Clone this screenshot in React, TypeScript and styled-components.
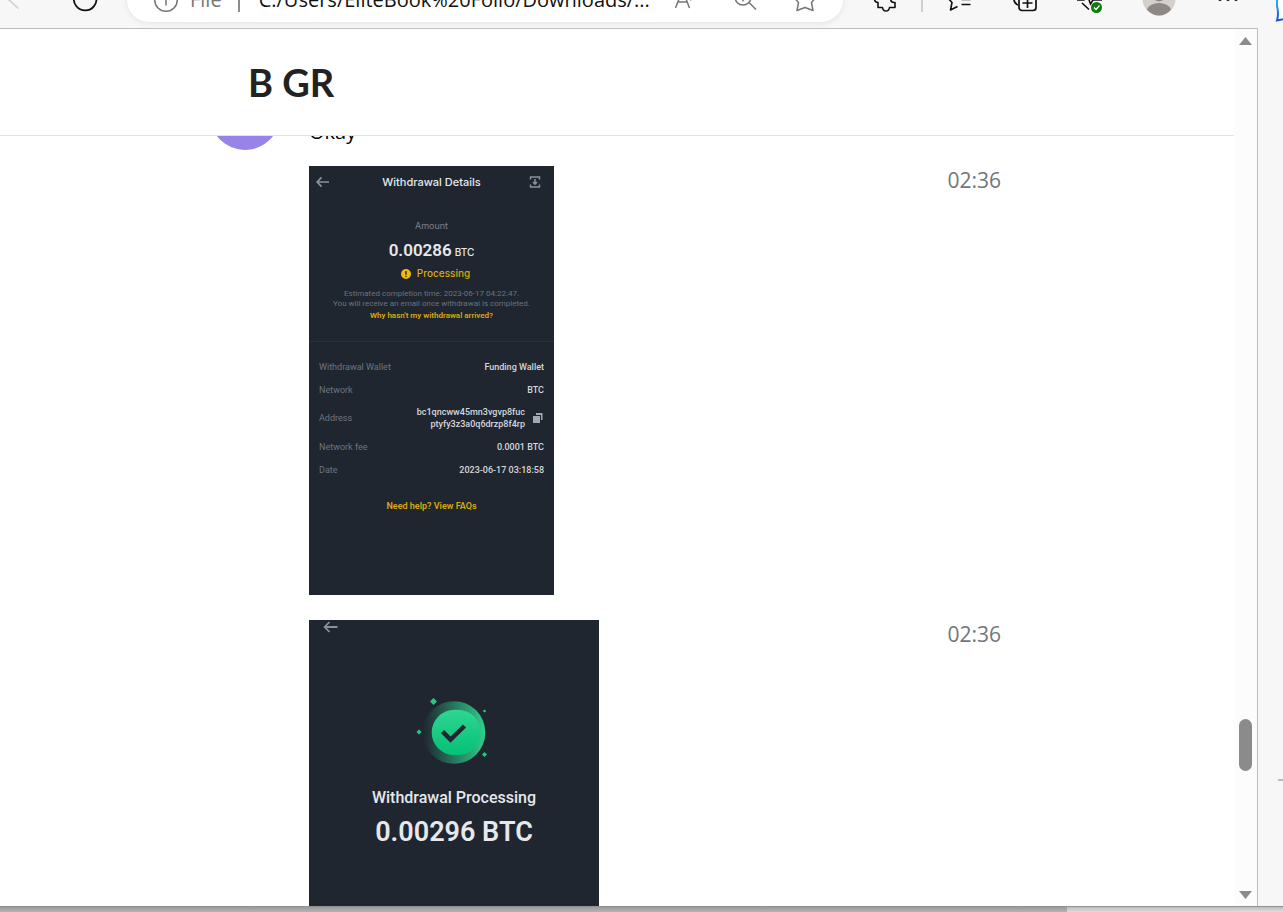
import React from "react";
import styled, { createGlobalStyle } from "styled-components";

const GlobalStyle = createGlobalStyle`
  * { box-sizing: border-box; }
  body { margin: 0; background: #f7f7f7; font-family: "Open Sans", "Noto Sans", sans-serif; color: #000; }
  button { border: 0; padding: 0; background: none; font: inherit; color: inherit; }
  svg { display: block; }
`;

const Window = styled.div`
  height: 100vh;
  display: flex;
  flex-direction: column;
  overflow: hidden;
`;

/* Browser toolbar: only its lower half is on screen */
const ToolbarClip = styled.header`
  height: 28px;
  flex: none;
  display: flex;
  align-items: flex-end;
  overflow: hidden;
`;

const Toolbar = styled.div`
  flex: 1;
  min-width: 0;
  height: 56px;
  display: flex;
  align-items: center;
`;

const IconButton = styled.button<{ $width: number }>`
  width: ${(p) => p.$width}px;
  height: 44px;
  flex: none;
  display: flex;
  align-items: center;
  justify-content: center;
`;

const AddressBar = styled.div`
  flex: 1;
  min-width: 0;
  height: 44px;
  margin: 0 18px 0 12px;
  padding: 0 24px;
  display: flex;
  align-items: center;
  background: #fff;
  border-radius: 22px;
  box-shadow: 0 1px 6px rgba(0, 0, 0, 0.09);
`;

const Scheme = styled.span`
  margin-left: 9px;
  font-size: 20px;
  line-height: 28px;
  color: #767676;
`;

const Divider = styled.span<{ $color: string; $gap: number }>`
  width: 2px;
  height: 24px;
  flex: none;
  margin-left: ${(p) => p.$gap}px;
  background: ${(p) => p.$color};
`;

const AddressInput = styled.input`
  flex: 1;
  min-width: 0;
  height: 28px;
  margin-left: 19px;
  padding: 0;
  border: 0;
  outline: 0;
  background: none;
  font: 20px/28px "Open Sans", "Noto Sans", sans-serif;
  color: #111;
`;

const Tools = styled.div`
  flex: none;
  display: flex;
  align-items: center;
`;

const Body = styled.div`
  flex: 1;
  min-height: 0;
  display: flex;
`;

const Page = styled.div`
  flex: 1;
  min-width: 0;
  display: flex;
  background: #fff;
  border-top: 1px solid #bcbcbc;
  border-right: 1px solid #bcbcbc;
`;

const Chat = styled.main`
  flex: 1;
  min-width: 0;
  display: flex;
  flex-direction: column;
`;

const ChatHeader = styled.div`
  flex: none;
  height: 107px;
  display: flex;
  align-items: center;
  border-bottom: 1px solid #e2e2e2;
`;

const Column = styled.div`
  width: 100%;
  max-width: 814px;
  margin: 0 auto;
`;

const ChatTitle = styled.h1`
  margin: 0;
  padding-left: 38px;
  font: 700 38px/52px Lato, "Open Sans", sans-serif;
  color: #222;
`;

const History = styled.div`
  flex: 1;
  min-height: 0;
  overflow: hidden;
`;

/* The history is scrolled, so the oldest message starts above the visible area */
const Messages = styled(Column)`
  margin-top: -56px;
  display: flex;
  flex-direction: column;
`;

const Message = styled.article`
  display: grid;
  grid-template-columns: 70px 1fr auto;
  column-gap: 29px;
  padding-right: 23px;
  margin-bottom: 25px;
  align-items: start;
`;

const TextMessage = styled(Message)`
  margin-bottom: 16px;
  align-items: end;
`;

const Avatar = styled.div`
  width: 70px;
  height: 70px;
  border-radius: 50%;
  background: #9884e8;
`;

const Text = styled.p`
  margin: 0;
  padding-bottom: 4px;
  font-size: 20px;
  line-height: 28px;
`;

const Time = styled.time`
  grid-column: 3;
  font-size: 21px;
  line-height: 28px;
  color: #70777b;
`;

const Photo = styled.section<{ $width: number; $height: number }>`
  grid-column: 2;
  width: ${(p) => p.$width}px;
  min-height: ${(p) => p.$height}px;
  display: flex;
  flex-direction: column;
  background: #1f2630;
  color: #e6e8ec;
  font-family: Roboto, Inter, sans-serif;
  text-align: center;
`;

const PhotoBar = styled.div`
  height: 32px;
  padding: 0 7px;
  display: grid;
  grid-template-columns: 18px 1fr 18px;
  align-items: center;
`;

const PhotoTitle = styled.h2`
  margin: 0;
  font: 500 11px/16px Inter, sans-serif;
`;

const Caption = styled.div`
  margin-top: 22px;
  font: 9px/12px Inter, sans-serif;
  color: #7b828d;
`;

const Amount = styled.div`
  margin-top: 6px;
  display: flex;
  align-items: baseline;
  justify-content: center;
  gap: 3px;
  font-size: 17px;
  font-weight: 600;
  line-height: 24px;
`;

const Unit = styled.span`
  font: 500 10px/12px Inter, sans-serif;
`;

const Status = styled.div`
  margin-top: 4px;
  padding-left: 8px;
  display: flex;
  align-items: center;
  justify-content: center;
  gap: 6px;
  font: 500 10px/15px Inter, sans-serif;
  color: #dba90e;
`;

const Note = styled.p`
  margin: 8px 0 0;
  font: 8px/10px Roboto, sans-serif;
  color: #6b727e;
`;

const GoldLink = styled.a<{ $size: number; $gap: number }>`
  align-self: center;
  margin-top: ${(p) => p.$gap}px;
  font-size: ${(p) => p.$size}px;
  font-weight: 600;
  line-height: 12px;
  color: #dba90e;
  text-decoration: none;
`;

const Details = styled.dl`
  margin: 19px 0 0;
  padding: 13px 10px 0;
  border-top: 1px solid #29303b;
  font: 9px/12px Roboto, sans-serif;
`;

const Detail = styled.div<{ $tall?: boolean }>`
  height: ${(p) => (p.$tall ? 34 : 23)}px;
  display: flex;
  align-items: center;
  justify-content: space-between;
`;

const Term = styled.dt`
  color: #6d7480;
`;

const Value = styled.dd`
  margin: 0;
  display: flex;
  align-items: center;
  gap: 7px;
  text-align: right;
  font-weight: 500;
  color: #d5d8dd;
`;

const BackBar = styled.div`
  height: 14px;
  padding-left: 14px;
  display: flex;
  align-items: center;
`;

const Art = styled.svg`
  margin: 58px auto 0;
`;

const ResultTitle = styled.h2`
  margin: 14px 0 0;
  font: 500 16px/24px Roboto, sans-serif;
`;

const ResultAmount = styled.div`
  margin-top: 4px;
  font-size: 27px;
  font-weight: 600;
  line-height: 36px;
`;

const Scrollbar = styled.div`
  width: 23px;
  flex: none;
  padding: 8px 5px 7px 0;
  display: flex;
  flex-direction: column;
  align-items: flex-end;
  background: #fcfcfc;
`;

const Spacer = styled.div<{ $grow: number }>`
  flex: ${(p) => p.$grow} 1 0;
`;

const Thumb = styled.div`
  width: 13px;
  height: 52px;
  border-radius: 7px;
  background: #8b8b8b;
`;

const Sidebar = styled.aside`
  width: 25px;
  flex: none;
  display: flex;
  flex-direction: column;
  align-items: flex-end;
`;

const SidebarMark = styled.div`
  width: 5px;
  height: 2px;
  background: #bcbcbc;
`;

const Taskbar = styled.div`
  height: 6px;
  flex: none;
  display: flex;
  border-top: 1px solid #929292;
  background: linear-gradient(#bdbdbd, #dedede);
`;

const TaskbarShade = styled.div`
  width: 83.2%;
  background: linear-gradient(#9b9b9b, #b3b3b3);
`;

const BackArrow = ({ size }: { size: number }) => (
  <svg width={size} height="12" viewBox="0 0 14 12" fill="none" stroke="#8b919c" strokeWidth="1.8">
    <path d="M14 6H1.5M6 1L1.2 6L6 11" />
  </svg>
);

const ScrollArrow = ({ down }: { down?: boolean }) => (
  <svg width="13" height="8" viewBox="0 0 13 8" fill="#8b8b8b">
    <path d={down ? "M0 0H13L6.5 8Z" : "M0 8H13L6.5 0Z"} />
  </svg>
);

const details: { label: string; value: React.ReactNode; tall?: boolean }[] = [
  { label: "Withdrawal Wallet", value: "Funding Wallet" },
  { label: "Network", value: "BTC" },
  {
    label: "Address",
    tall: true,
    value: (
      <>
        <span>
          bc1qncww45mn3vgvp8fuc
          <br />
          ptyfy3z3a0q6drzp8f4rp
        </span>
        <svg width="12" height="12" viewBox="0 0 12 12" fill="#a3a7ae">
          <path d="M1 4H8V11H1Z" />
          <path d="M4 1H10.5V8H9V3H4Z" />
        </svg>
      </>
    ),
  },
  { label: "Network fee", value: "0.0001 BTC" },
  { label: "Date", value: "2023-06-17 03:18:58" },
];

export default function App() {
  return (
    <Window>
      <GlobalStyle />
      <ToolbarClip>
        <Toolbar>
          <IconButton $width={55} aria-label="Back">
            <svg width="55" height="44" viewBox="0 0 55 44" fill="none" stroke="#cfcfcf" strokeWidth="1.6">
              <path d="M18.5 13.5L9 22L18.5 30.5" />
            </svg>
          </IconButton>
          <IconButton $width={60} aria-label="Refresh">
            <svg width="60" height="44" viewBox="0 0 60 44" fill="none" stroke="#111" strokeWidth="1.8">
              <path d="M36 11.5A11.3 11.3 0 1 0 41 18M36 6V12H30" />
            </svg>
          </IconButton>
          <AddressBar>
            <svg width="30" height="30" viewBox="0 0 30 30" fill="none" stroke="#767676" strokeWidth="1.5">
              <circle cx="15" cy="15" r="11.3" />
              <path d="M15 13.5V20.5M15 9V11" />
            </svg>
            <Scheme>File</Scheme>
            <Divider $color="#8c8c8c" $gap={16} />
            <AddressInput aria-label="Address" readOnly value="C:/Users/EliteBook%20Folio/Downloads/..." />
            <IconButton $width={32} aria-label="Read aloud">
              <svg width="32" height="32" viewBox="0 0 32 32" fill="none" stroke="#767676" strokeWidth="1.5">
                <path d="M8.5 24L15.5 6L22.5 24M11 18H20" />
                <path d="M22 8Q25 12 23.5 16.5" />
              </svg>
            </IconButton>
            <IconButton $width={92} aria-label="Zoom">
              <svg width="32" height="32" viewBox="0 0 32 32" fill="none" stroke="#767676" strokeWidth="1.5">
                <circle cx="14" cy="13" r="8" />
                <path d="M20 18.5L27 25.5M14 9V17.5M10 13H18" />
              </svg>
            </IconButton>
            <IconButton $width={28} aria-label="Add to favorites">
              <svg width="28" height="28" viewBox="0 0 28 28" fill="none" stroke="#767676" strokeWidth="1.5" strokeLinejoin="round">
                <path d="M14 3L17.5 10L25 11.2L20.5 16.5L22 24.5L14 21.5L6 24.5L7.5 16.5L3 11.2L10.5 10Z" />
              </svg>
            </IconButton>
          </AddressBar>
          <Tools>
            <IconButton $width={48} aria-label="Extensions">
              <svg width="28" height="28" viewBox="0 0 28 28" fill="none" stroke="#111" strokeWidth="1.6" strokeLinejoin="round">
                <path d="M8 4H11.5A3 3 0 0 1 17 4H23V10A3 3 0 0 0 23 16.5H24V21.5H18.5Q18 25 15 25T11.5 21.5H7V16.5Q3.5 16 3.5 13T7 10Z" />
              </svg>
            </IconButton>
            <Divider $color="#cfcfcf" $gap={12} />
            <IconButton $width={73} aria-label="Favorites">
              <svg width="28" height="28" viewBox="0 0 28 28" fill="none" stroke="#111" strokeWidth="1.6" strokeLinejoin="round">
                <path d="M13 6L10 3L7.5 10L1 11L6 16.5L4.5 24L11.5 20.5M15.500 13.5H24.5M15.5 18.5H24.5M16 8H24.5" />
              </svg>
            </IconButton>
            <IconButton $width={58} aria-label="Collections">
              <svg width="28" height="28" viewBox="0 0 28 28" fill="none" stroke="#111" strokeWidth="1.7">
                <rect x="8" y="7" width="17" height="17.5" rx="3" />
                <path d="M16.5 12V22M11.5 17H21.5M7 19Q3 17.5 3 13V7Q3 2 8 2H16Q20 2 21 6" />
              </svg>
            </IconButton>
            <IconButton $width={72} aria-label="Browser essentials">
              <svg width="28" height="28" viewBox="0 0 28 28" fill="none" stroke="#111" strokeWidth="1.6">
                <path d="M1 14H8L11 8L14.5 18L17 14H26M6 17L13 23.5M4 10Q3 3 9 3Q12 3 14 6Q16 3 20 3Q25 4 24 10" />
                <circle cx="20.5" cy="21.5" r="5.5" fill="#107c10" stroke="none" />
                <path d="M18 21.5L20 23.5L23.5 19.5" stroke="#fff" strokeWidth="1.3" />
              </svg>
            </IconButton>
            <IconButton $width={66} aria-label="Profile">
              <svg width="34" height="34" viewBox="0 0 34 34">
                <circle cx="17" cy="16" r="16.5" fill="#d4d0cc" />
                <circle cx="17" cy="12.5" r="6" fill="#8d8885" />
                <path d="M5 26.5Q8 20 17 20T29 26.5Q24 32.5 17 32.5T5 26.5Z" fill="#8d8885" />
              </svg>
            </IconButton>
            <IconButton $width={71} aria-label="Settings and more">
              <svg width="24" height="6" viewBox="0 0 24 6" fill="#111">
                <circle cx="4" cy="2.5" r="1.6" />
                <circle cx="12" cy="2.5" r="1.6" />
                <circle cx="20" cy="2.5" r="1.6" />
              </svg>
            </IconButton>
            <IconButton $width={20} aria-label="Discover">
              <svg width="20" height="44" viewBox="0 0 20 44" fill="none" strokeWidth="2">
                <defs>
                  <linearGradient id="discover" x1="0" y1="0" x2="0" y2="1">
                    <stop offset="0.5" stopColor="#2aa7ee" />
                    <stop offset="1" stopColor="#1b4fd0" />
                  </linearGradient>
                </defs>
                <path d="M14 8V28Q16 36 14 42.5L21 41V8Z" fill="#fff" stroke="url(#discover)" />
              </svg>
            </IconButton>
          </Tools>
        </Toolbar>
      </ToolbarClip>

      <Body>
        <Page>
          <Chat>
            <ChatHeader>
              <Column>
                <ChatTitle>B GR</ChatTitle>
              </Column>
            </ChatHeader>
            <History>
              <Messages>
                <TextMessage>
                  <Avatar />
                  <Text>Okay</Text>
                </TextMessage>

                <Message>
                  <Photo $width={245} $height={429}>
                    <PhotoBar>
                      <BackArrow size={13} />
                      <PhotoTitle>Withdrawal Details</PhotoTitle>
                      <svg width="12" height="12" viewBox="0 0 12 12" fill="none" stroke="#8b919c" strokeWidth="1.5">
                        <path d="M1.5 3.5V1H10.500V3.5M1.5 8.5V11H10.5V8.5M6 3V8M4 6L6 8.2L8 6" />
                      </svg>
                    </PhotoBar>
                    <Caption>Amount</Caption>
                    <Amount>
                      0.00286 <Unit>BTC</Unit>
                    </Amount>
                    <Status>
                      <svg width="10" height="10" viewBox="0 0 10 10">
                        <circle cx="5" cy="5" r="5" fill="#f0b90b" />
                        <path d="M5 2V5.7M5 6.7V8" stroke="#1f2630" strokeWidth="1.4" />
                      </svg>
                      Processing
                    </Status>
                    <Note>
                      Estimated completion time: 2023-06-17 04:22:47.
                      <br />
                      You will receive an email once withdrawal is completed.
                    </Note>
                    <GoldLink href="#arrival" $size={8} $gap={1}>
                      Why hasn't my withdrawal arrived?
                    </GoldLink>
                    <Details>
                      {details.map((d) => (
                        <Detail key={d.label} $tall={d.tall}>
                          <Term>{d.label}</Term>
                          <Value>{d.value}</Value>
                        </Detail>
                      ))}
                    </Details>
                    <GoldLink href="#faq" $size={9} $gap={19}>
                      Need help? View FAQs
                    </GoldLink>
                  </Photo>
                  <Time>02:36</Time>
                </Message>

                <Message>
                  <Photo $width={290} $height={429}>
                    <BackBar>
                      <BackArrow size={15} />
                    </BackBar>
                    <Art width="80" height="80" viewBox="0 0 80 80">
                      <defs>
                        <linearGradient id="ring" x1="0" y1="0" x2="1" y2="0">
                          <stop offset="0" stopColor="#2ebd85" stopOpacity="0" />
                          <stop offset="1" stopColor="#2fd08c" />
                        </linearGradient>
                        <linearGradient id="disc" x1="0" y1="0" x2="0" y2="1">
                          <stop offset="0" stopColor="#2fd692" />
                          <stop offset="1" stopColor="#04c076" />
                        </linearGradient>
                      </defs>
                      <circle cx="40" cy="40.5" r="31.3" fill="url(#ring)" />
                      <circle cx="40.4" cy="40.5" r="22.7" fill="url(#disc)" />
                      <circle cx="44" cy="40.5" r="22.7" fill="url(#disc)" />
                      <path d="M28.5 39.5L36.5 47.5L50.5 34" fill="none" stroke="#1f2630" strokeWidth="4.5" />
                      <g fill="#1fcb85">
                        <path d="M19.5 6L23 9.5L19.5 13L16 9.5Z" />
                        <path d="M5 37.5L7.5 40L5 42.5L2.5 40Z" />
                        <path d="M70.5 60L73 62.5L70.5 65L68 62.5Z" />
                        <circle cx="70.5" cy="19" r="1.3" />
                      </g>
                    </Art>
                    <ResultTitle>Withdrawal Processing</ResultTitle>
                    <ResultAmount>0.00296 BTC</ResultAmount>
                  </Photo>
                  <Time>02:36</Time>
                </Message>
              </Messages>
            </History>
          </Chat>
          <Scrollbar>
            <ScrollArrow />
            <Spacer $grow={674} />
            <Thumb />
            <Spacer $grow={120} />
            <ScrollArrow down />
          </Scrollbar>
        </Page>
        <Sidebar>
          <Spacer $grow={751} />
          <SidebarMark />
          <Spacer $grow={125} />
        </Sidebar>
      </Body>
      <Taskbar>
        <TaskbarShade />
      </Taskbar>
    </Window>
  );
}
